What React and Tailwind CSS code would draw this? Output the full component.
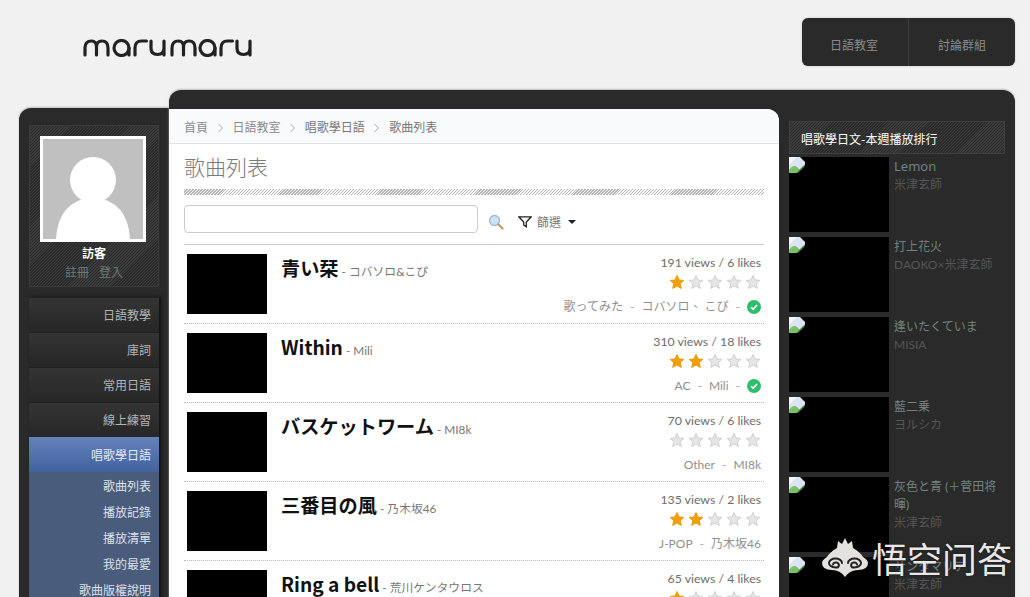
const cjk = "font-['Lato','Noto_Sans_CJK_TC',sans-serif]";
const hatchDark = "bg-[repeating-linear-gradient(135deg,#3c3c3c_0px,#3c3c3c_1px,#2a2a2a_1px,#2a2a2a_2.1px)]";

const menu = ["日語教學", "庫詞", "常用日語", "線上練習"];
const sub = ["歌曲列表", "播放記錄", "播放清單", "我的最愛", "歌曲版權說明"];

const songs = [
  { t: "青い栞", a: "コバソロ&こぴ", s: "191 views / 6 likes", r: 1, tags: ["歌ってみた", "コバソロ、 こぴ"], ok: true },
  { t: "Within", a: "Mili", s: "310 views / 18 likes", r: 2, tags: ["AC", "Mili"], ok: true },
  { t: "バスケットワーム", a: "MI8k", s: "70 views / 6 likes", r: 0, tags: ["Other", "MI8k"] },
  { t: "三番目の風", a: "乃木坂46", s: "135 views / 2 likes", r: 2, tags: ["J-POP", "乃木坂46"] },
  { t: "Ring a bell", a: "荒川ケンタウロス", s: "65 views / 4 likes", r: 1, tags: [] },
];

const ranks = [
  { t: "Lemon", a: "米津玄師", latin: true },
  { t: "打上花火", a: "DAOKO×米津玄師" },
  { t: "逢いたくていま", a: "MISIA" },
  { t: "藍二乗", a: "ヨルシカ" },
  { t: "灰色と青 (＋菅田将暉)", a: "米津玄師" },
  { t: "サンタマリア", a: "米津玄師" },
];

function Logo() {
  return (
    <svg width="171" height="18" viewBox="0 0 170 18" fill="none" stroke="#222" strokeWidth="3.2" strokeLinecap="round">
      <path d="M1.500 16V9Q1.500 2 8 2Q13 2 13 8V16M13 8Q13 2 18.500 2Q24.500 2 24.500 9V16" />
      <circle cx="38" cy="9" r="7.500" />
      <path d="M45.500 9V16" />
      <path d="M51.500 16V9Q51.500 2 58 2H63" />
      <path d="M67.500 2V9Q67.500 15.500 74 15.500Q80.500 15.500 80.500 9V2M80.500 9V16" />
      <path d="M88.500 16V9Q88.500 2 95 2Q100 2 100 8V16M100 8Q100 2 105.500 2Q111.500 2 111.500 9V16" />
      <circle cx="124" cy="9" r="7.500" />
      <path d="M131.500 9V16" />
      <path d="M137.500 16V9Q137.500 2 144 2H149" />
      <path d="M153.500 2V9Q153.500 15.500 160 15.500Q166.500 15.500 166.500 9V2M166.500 9V16" />
    </svg>
  );
}

function Star({ on }) {
  return (
    <svg width="16" height="16" viewBox="0 0 16 16">
      <polygon
        points="8,1.500 10,6 14.800,6.400 11.200,9.600 12.300,14.400 8,11.900 3.700,14.400 4.800,9.600 1.200,6.400 6,6"
        fill={on ? "#f3a007" : "#e6e6e6"}
        stroke={on ? "#e89a05" : "#d0d0d0"}
        strokeWidth="1"
        strokeLinejoin="round"
      />
    </svg>
  );
}

function Check() {
  return (
    <svg width="14" height="14" viewBox="0 0 14 14">
      <circle cx="7" cy="7" r="7" fill="#2ebd6b" />
      <path d="M4 7.200L6.200 9.300L10 5" fill="none" stroke="#fff" strokeWidth="1.800" />
    </svg>
  );
}

function Broken() {
  return (
    <svg width="16" height="16" viewBox="0 0 16 16" className="block shrink-0">
      <path d="M0 0H11L16 5V8L8 16H0Z" fill="#dbe4f3" />
      <path d="M0 0H8L0 8Z" fill="#f2f5fb" />
      <path d="M0 15V13Q4 7 8 10L11 13L8 16H0Z" fill="#7fbf6a" />
      <path d="M8 16L16 8" stroke="#3f9440" strokeWidth="1.300" />
    </svg>
  );
}

function Watermark() {
  return (
    <div className="pointer-events-none absolute left-[822px] top-[538px] flex items-center gap-[4px] text-[#e8e8e8]">
      <svg width="46" height="39" viewBox="0 0 46 39">
        <path
          d="M23 0L26 6L30 3L31 10Q38 14 41 19Q46 22 46 25Q46 32 36 32Q28 32 23 39Q18 32 10 32Q0 32 0 25Q0 22 5 19Q8 14 15 10L16 3L20 6Z"
          fill="#e4e2de"
        />
        <path
          d="M20 25a6.500 4.500 0 1 0-6.500 4.500a3 2.500 0 1 0-2.500-3M26 25a6.500 4.500 0 1 1 6.500 4.500a3 2.500 0 1 1 2.500-3"
          fill="none"
          stroke="#222"
          strokeWidth="2"
          strokeLinecap="round"
        />
      </svg>
      <span className="font-['Noto_Sans_CJK_SC',sans-serif] text-[35px] font-normal leading-none [text-shadow:0_0_3px_rgba(0,0,0,0.5)]">
        悟空问答
      </span>
    </div>
  );
}

function Chevron() {
  return (
    <svg width="7" height="10" viewBox="0 0 7 10">
      <path d="M1.500 1L5.500 5L1.500 9" fill="none" stroke="#aaa" strokeWidth="1" />
    </svg>
  );
}

export default function App() {
  return (
    <div className={`relative h-[597px] w-[1030px] overflow-hidden bg-[#f1f1f1] ${cjk}`}>
      <header className="flex h-[90px] items-start justify-between pl-[83px] pr-[15px]">
        <div className="mt-[39px]">
          <Logo />
        </div>
        <nav className="mt-[18px] flex h-[48px] w-[213px] rounded-md bg-[#2a2a2a] text-xs text-[#8a8a8a] shadow-[0_0_2px_#bbb]">
          <div className="flex w-[107px] items-center justify-center border-r border-[#3f3f3f] pr-[2px] pt-[8px]">日語教室</div>
          <div className="flex flex-1 items-center justify-center pt-[8px]">討論群組</div>
        </nav>
      </header>

      <div className="ml-[19px] mr-[15px] flex items-start">
        <aside className="mt-[18px] h-[500px] w-[150px] rounded-tl-xl bg-[#2a2a2a] px-[10px] pt-[17px] shadow-[0_-1px_2px_#bbb]">
          <div className={`flex h-[162px] flex-col items-center border border-[#3b3b3b] pt-[10px] ${hatchDark}`}>
            <div className="relative mr-[2px] h-[106px] w-[106px] overflow-hidden border-[3px] border-white bg-[#c0c0c0]">
              <svg width="100" height="100" viewBox="0 0 100 100" className="block">
                <circle cx="50" cy="41" r="23" fill="#fff" />
                <path d="M13 100Q15 62 50 58Q85 62 87 100Z" fill="#fff" />
              </svg>
            </div>
            <div className="mt-[3px] text-xs font-bold leading-[18px] text-white">訪客</div>
            <div className="flex gap-[10px] text-xs leading-[20px] text-[#6a7876]">
              <span>註冊</span>
              <span>登入</span>
            </div>
          </div>
          <div className="mt-[10px] w-[130px] text-right text-xs shadow-[2px_0_3px_#111]">
            {menu.map((m) => (
              <div
                key={m}
                className="h-[35px] border-t border-[#222] bg-gradient-to-b from-[#343434] to-[#272727] pr-[8px] leading-[35px] text-[#b4b4b4]"
              >
                {m}
              </div>
            ))}
            <div className="h-[35px] bg-gradient-to-b from-[#6582bb] to-[#42619f] pr-[8px] leading-[37px] text-[#e4e9f2]">
              唱歌學日語
            </div>
            <div className="bg-[#4a5c7c] pt-[2px] text-[#dde2ea]">
              {sub.map((s) => (
                <div key={s} className="h-[26px] pr-[8px] leading-[26px]">
                  {s}
                </div>
              ))}
            </div>
          </div>
        </aside>

        <main className="flex min-w-0 flex-1 rounded-t-xl bg-[#2a2a2a] pt-[19px] shadow-[0_-1px_2px_#bbb]">
          <section className="h-[520px] w-[610px] shrink-0 rounded-tr-xl bg-white">
            <div className="flex h-[35px] items-center gap-[8.7px] rounded-tr-xl border-b border-[#e3e3e3] bg-[#f8fafc] pl-[15px] pt-[3px] text-xs text-[#8a8a8a]">
              <span>首頁</span>
              <Chevron />
              <span>日語教室</span>
              <Chevron />
              <span className="text-[#777]">唱歌學日語</span>
              <Chevron />
              <span className="text-[#777]">歌曲列表</span>
            </div>
            <div className="px-[15px]">
              <h1 className="mt-[8px] text-[21px] font-light leading-[30px] text-[#7a7a7a]">歌曲列表</h1>
              <div className="mt-[7px] h-[6px] bg-[repeating-linear-gradient(135deg,#b0b0b0_0px,#b0b0b0_1px,#fff_1px,#fff_2.1px)]" />
              <div className="mt-[10px] flex h-[28px] items-center">
                <div className="h-[28px] w-[294px] rounded border border-[#ccc] bg-white" />
                <svg width="16" height="16" viewBox="0 0 16 16" className="ml-[10px] mt-[5px]">
                  <circle cx="6.500" cy="6.500" r="5" fill="#cfe2f3" stroke="#9dbcd8" strokeWidth="1.300" />
                  <path d="M10.500 10.500L14.500 14.500" stroke="#c49a5e" strokeWidth="2.200" strokeLinecap="round" />
                </svg>
                <svg width="14" height="12" viewBox="0 0 14 12" className="ml-[14px] mt-[5px]">
                  <path d="M0.800 0.800H13.200L8.300 6V10.800L5.700 9V6Z" fill="none" stroke="#222" strokeWidth="1.300" />
                </svg>
                <span className="ml-[5px] mt-[7px] text-xs text-[#777]">篩選</span>
                <span className="ml-[7px] mt-[6px] h-0 w-0 border-x-[4px] border-t-[4px] border-x-transparent border-t-[#222]" />
              </div>
              <div className="mt-[11px] border-t border-[#ccc]">
                {songs.map((s) => (
                  <div key={s.t} className="flex h-[79px] border-b border-dotted border-[#bbb] px-[3px] pt-[9px]">
                    <div className="h-[60px] w-[80px] shrink-0 bg-black" />
                    <div className="ml-[14px] flex h-[29px] flex-1 items-center whitespace-nowrap">
                      <span className="font-['Noto_Sans_CJK_TC',sans-serif] text-[19.2px] font-bold leading-[29px] text-[#111]">{s.t}</span>
                      <span className="ml-[3px] mt-[6px] text-[11.8px] text-[#777]">- {s.a}</span>
                    </div>
                    <div className="flex flex-col items-end text-[12.3px] text-[#777]">
                      <div className="h-[18px] leading-[18px] text-[#6d6d6d]">{s.s}</div>
                      <div className="flex h-[19px] items-center gap-[3px]">
                        {[0, 1, 2, 3, 4].map((i) => (
                          <Star key={i} on={i < s.r} />
                        ))}
                      </div>
                      <div className="mt-[8px] flex h-[16px] items-center gap-[7px] text-xs leading-[16px] text-[#8f8f8f]">
                        {s.tags.map((t, i) => (
                          <div key={t} className="flex items-center gap-[7px]">
                            {i > 0 && <span className="text-[#aaa]">-</span>}
                            <span>{t}</span>
                          </div>
                        ))}
                        {s.ok && <span className="text-[#aaa]">-</span>}
                        {s.ok && <Check />}
                      </div>
                    </div>
                  </div>
                ))}
              </div>
            </div>
          </section>

          <section className="ml-[10px] w-[216px] shrink-0 pt-[12px]">
            <div className={`flex h-[33px] items-center border border-[#3f3f3f] pl-[11px] pt-[5px] text-xs text-white ${hatchDark}`}>
              唱歌學日文-本週播放排行
            </div>
            <div className="mt-[3px] flex flex-col gap-[5px]">
              {ranks.map((r) => (
                <div key={r.t} className="flex h-[75px]">
                  <div className="h-[75px] w-[100px] shrink-0 bg-black">
                    <Broken />
                  </div>
                  <div className="ml-[5px] w-[106px] pt-[1px] text-xs leading-[18px]">
                    <div className={r.latin ? "-mt-[1px] mb-[1px] font-['Noto_Sans',sans-serif] text-[13px] text-[#72827f]" : "text-[#72827f]"}>{r.t}</div>
                    <div className="text-[#555]">{r.a}</div>
                  </div>
                </div>
              ))}
            </div>
          </section>
        </main>
      </div>
      <Watermark />
    </div>
  );
}
